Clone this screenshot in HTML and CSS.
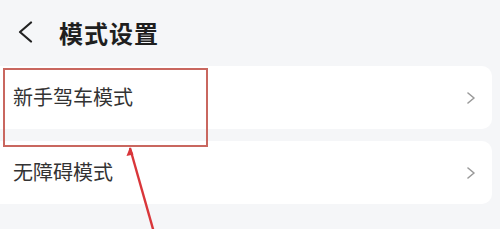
FILE: index.html
```html
<!DOCTYPE html>
<html lang="zh-CN">

<head>
    <meta charset="UTF-8">
    <meta name="viewport" content="width=device-width, initial-scale=1.0">
    <title>模式设置</title>
    <link rel="stylesheet" href="styles.css">
</head>

<body>
    <main class="page">
        <header class="top-bar">
            <svg class="back" width="16" height="22" viewBox="0 0 16 22">
                <path d="M14 1.5 L3 11 L14 20.5" fill="none" stroke="#222" stroke-width="2.2" stroke-linecap="round" stroke-linejoin="round"/>
            </svg>
            <h1 class="title">模式设置</h1>
        </header>

        <div class="list">
            <div class="item">
                <span class="label">新手驾车模式</span>
                <svg class="arrow" width="10" height="12" viewBox="0 0 10 12">
                    <path d="M2 1 L8 6 L2 11" fill="none" stroke="#9a9a9a" stroke-width="1.6" stroke-linecap="round" stroke-linejoin="round"/>
                </svg>
            </div>
            <div class="item">
                <span class="label">无障碍模式</span>
                <svg class="arrow" width="10" height="12" viewBox="0 0 10 12">
                    <path d="M2 1 L8 6 L2 11" fill="none" stroke="#9a9a9a" stroke-width="1.6" stroke-linecap="round" stroke-linejoin="round"/>
                </svg>
            </div>
        </div>

        <!-- markup over the screenshot -->
        <div class="mark"></div>
        <svg class="pointer" width="40" height="90" viewBox="0 0 40 90">
            <path d="M10 2 L35 90" stroke="#d9363a" stroke-width="2.4" fill="none"/>
            <path d="M10 1 L6.5 10 L13.5 8.5 Z" fill="#d9363a"/>
        </svg>
    </main>
</body>

</html>
```

FILE: styles.css
```css
* {
    margin: 0;
    padding: 0;
    box-sizing: border-box;
}

body {
    background-color: #f5f6f8;
    font-family: "Noto Sans CJK SC", "Noto Sans", sans-serif;
    color: #222;
    overflow: hidden;
}

.page {
    position: relative;
    width: 500px;
    height: 229px;
}

.top-bar {
    height: 66px;
    display: flex;
    align-items: center;
    padding-left: 17px;
    padding-bottom: 2px;
}

.back {
    display: block;
}

.title {
    margin-left: 26px;
    font-size: 24px;
    font-weight: 700;
    letter-spacing: 1px;
    color: #1f1f1f;
}

.list {
    display: flex;
    flex-direction: column;
    gap: 12px;
    padding-right: 8px;
}

.item {
    height: 63px;
    background-color: #fff;
    border-radius: 0 10px 10px 0;
    display: flex;
    align-items: center;
    justify-content: space-between;
    padding: 0 16px 0 13px;
}

.item .label {
    font-size: 20px;
    color: #333;
    margin-top: -3px;
}

.arrow {
    display: block;
}

/* red box + arrow drawn on top */
.mark {
    position: absolute;
    left: 3px;
    top: 68px;
    width: 205px;
    height: 79px;
    border: 2px solid #c9675f;
}

.pointer {
    position: absolute;
    left: 120px;
    top: 146px;
}
```
